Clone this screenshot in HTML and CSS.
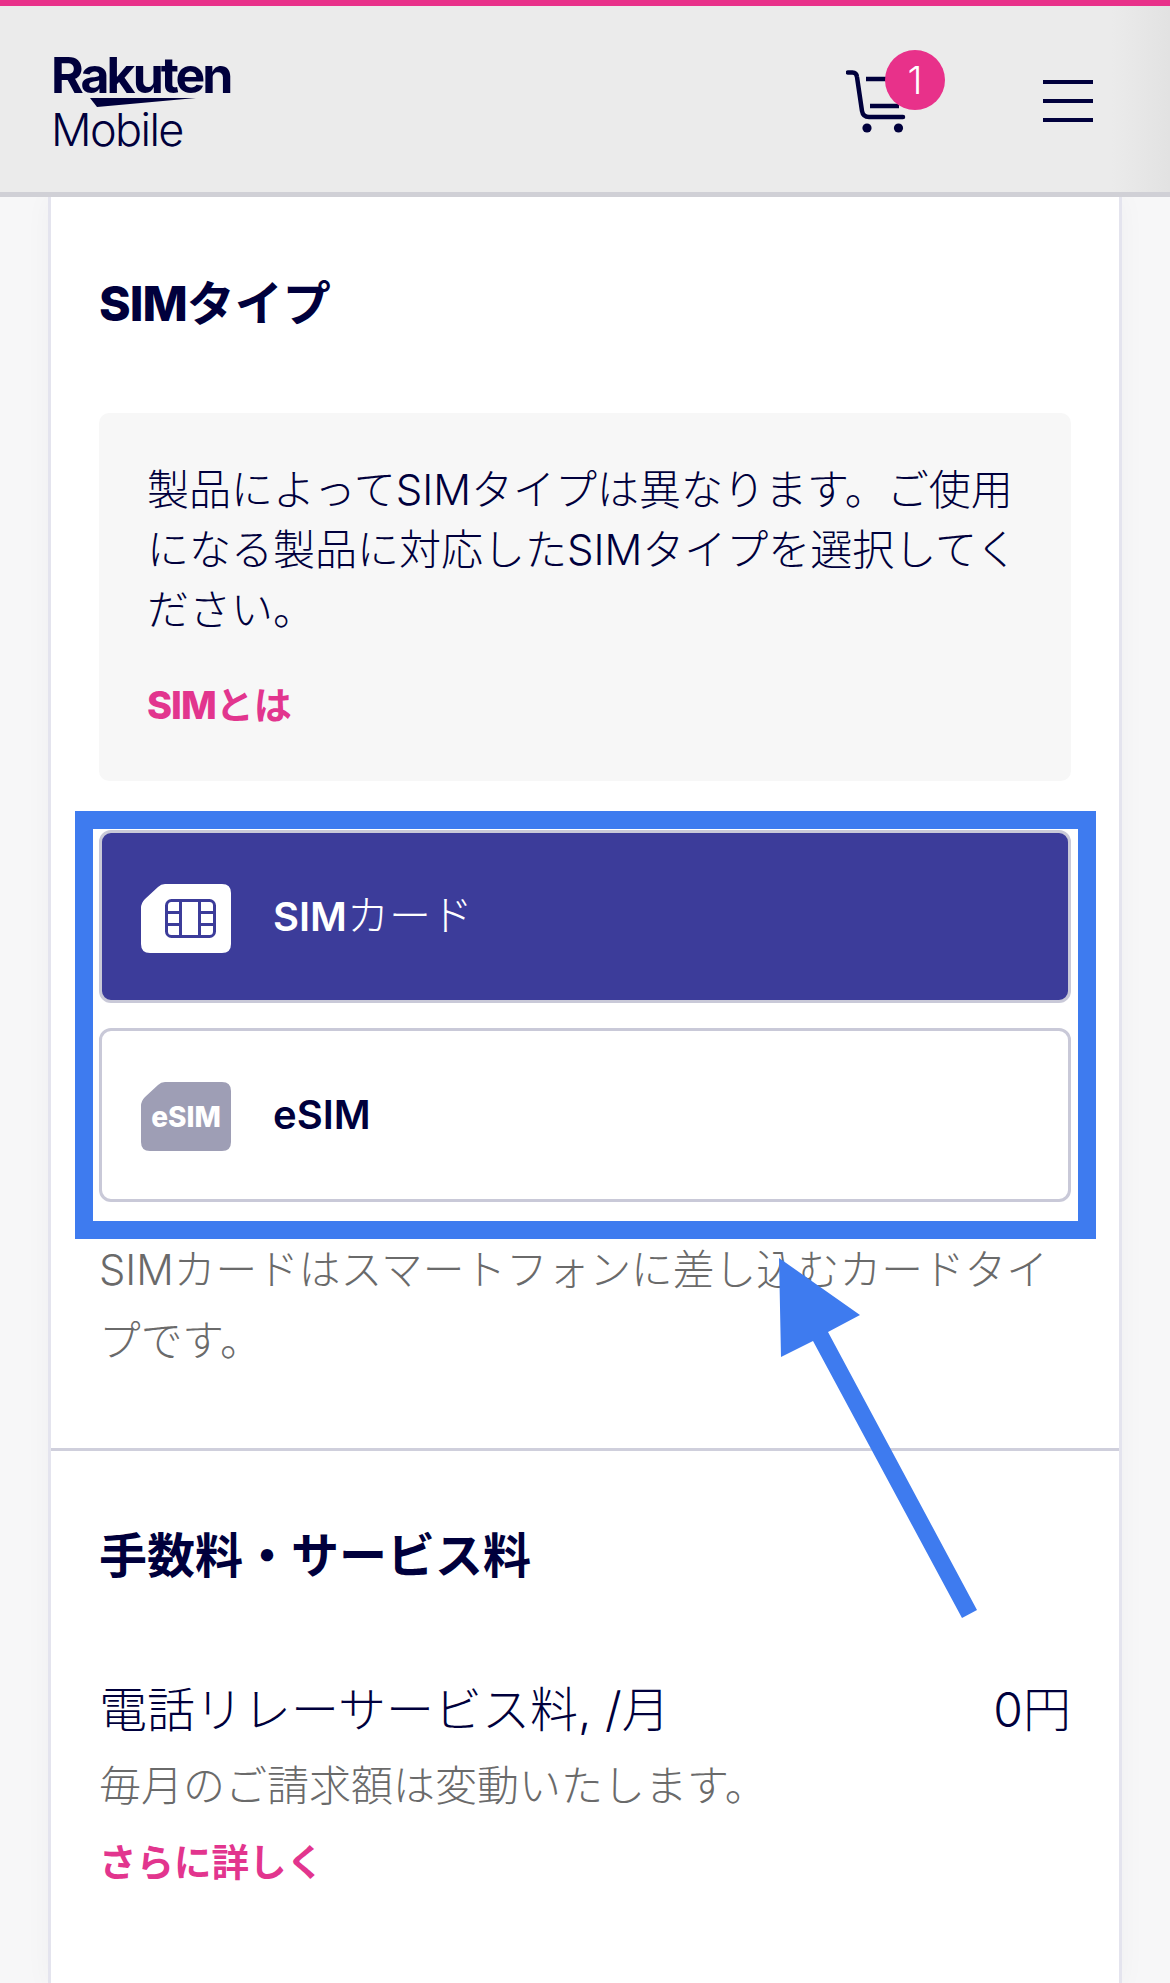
FILE: index.html
```html
<!DOCTYPE html>
<html lang="ja">
<head>
<meta charset="utf-8">
<title>Rakuten Mobile SIMタイプ</title>
<link rel="stylesheet" href="styles.css">
</head>
<body>
<div class="page">
  <header class="header">
    <a class="logo">
      <span class="logo-top">Rakuten</span>
      <svg class="logo-swoosh" viewBox="0 0 106 9"><polygon points="0,0 106,0 7,9"/></svg>
      <span class="logo-bottom">Mobile</span>
    </a>
    <div class="header-actions">
      <div class="cart">
        <svg class="cart-icon" viewBox="0 0 60 66" fill="none">
          <path d="M2 2.500H6.500Q10.500 2.500 11 7L16 41Q17 47 23 47H57" stroke-width="4.500" stroke-linecap="round"/>
          <path d="M20 9H50M24 36H53" stroke-width="4.500"/>
          <circle class="wheel" cx="21" cy="58" r="4.600"/>
          <circle class="wheel" cx="52.500" cy="58" r="4.600"/>
        </svg>
        <span class="badge">1</span>
      </div>
      <div class="menu"><i></i><i></i><i></i></div>
    </div>
  </header>

  <main class="card">
    <section class="section sim-section">
      <h2 class="title"><span class="latin">SIM</span>タイプ</h2>
      <div class="note">
        <p>製品によってSIMタイプは異なります。ご使用になる製品に対応したSIMタイプを選択してください。</p>
        <a class="link note-link"><span class="latin">SIM</span>とは</a>
      </div>
      <div class="options">
        <div class="option selected">
          <svg class="sim-icon" viewBox="0 0 90 69">
            <path class="sim-body" d="M24 0H81Q90 0 90 9V60Q90 69 81 69H9Q0 69 0 60V24Q0 19 4 15L17 3Q20 0 24 0Z"/>
            <g class="chip" fill="none">
              <rect x="25.500" y="16.500" width="48" height="36" rx="5"/>
              <path d="M39.500 16.500V52.500M58.500 16.500V52.500M25.500 28.500H39.500M25.500 40.500H39.500M58.500 28.500H73.500M58.500 40.500H73.500"/>
            </g>
          </svg>
          <span class="option-label"><b>SIM</b>カード</span>
        </div>
        <div class="option">
          <svg class="sim-icon" viewBox="0 0 90 69">
            <path class="esim-body" d="M24 0H81Q90 0 90 9V60Q90 69 81 69H9Q0 69 0 60V24Q0 19 4 15L17 3Q20 0 24 0Z"/>
            <text class="esim-text" x="45" y="45" text-anchor="middle">eSIM</text>
          </svg>
          <span class="option-label strong">eSIM</span>
        </div>
        <span class="frame"></span>
      </div>
      <p class="help">SIMカードはスマートフォンに差し込むカードタイプです。</p>
    </section>

    <section class="section fee-section">
      <h2 class="title">手数料・サービス料</h2>
      <div class="fee-row">
        <span class="fee-name">電話リレーサービス料, /月</span>
        <span class="fee-price">0円</span>
      </div>
      <p class="fee-note">毎月のご請求額は変動いたします。</p>
      <a class="link more">さらに詳しく</a>
    </section>
  </main>

  <svg class="arrow" viewBox="0 0 1170 1983">
    <polygon points="779,1258 860,1315 828,1332 977,1610 962,1618 813,1341 781,1357"/>
  </svg>
</div>
</body>
</html>
```
FILE: styles.css
```css
* { box-sizing: border-box; }
html, body { margin: 0; padding: 0; }
body {
  font-family: Inter, "Noto Sans CJK JP", sans-serif;
  font-weight: 300;
  color: #00003c;
  background: #f7f7f8;
}
.page {
  position: relative;
  width: 1170px;
  height: 1983px;
  overflow: hidden;
  border-top: 6px solid #e8318a;
}
.header {
  position: relative;
  height: 191px;
  padding: 0 77px 0 51px;
  display: flex;
  align-items: center;
  justify-content: space-between;
  background: linear-gradient(90deg, #ebebeb 95%, #e2e2e2 100%);
  border-bottom: 5px solid #d0d0d6;
}
.logo {
  display: flex;
  flex-direction: column;
  align-items: flex-start;
  margin-top: 4px;
}
.logo-top {
  font-size: 50px;
  line-height: 44px;
  font-weight: 700;
  letter-spacing: -3px;
  height: 44px;
}
.logo-swoosh { width: 106px; height: 9px; margin: 1px 0 0 39px; fill: #00003c; display: block; }
.logo-bottom {
  font-size: 45px;
  line-height: 40px;
  font-weight: 300;
  letter-spacing: -1.600px;
  margin-top: 3px;
}
.header-actions { display: flex; align-items: flex-start; gap: 137px; height: 82px; }
.cart { position: relative; width: 60px; height: 66px; margin-top: 12px; }
.cart-icon { width: 60px; height: 66px; display: block; stroke: #00003c; }
.wheel { fill: #00003c; stroke: none; }
.badge {
  position: absolute;
  left: 39px;
  top: -20px;
  width: 60px;
  height: 60px;
  border-radius: 50%;
  background: #e8318a;
  color: #fff;
  font-size: 38px;
  font-weight: 300;
  line-height: 60px;
  text-align: center;
}
.menu { width: 50px; display: flex; flex-direction: column; gap: 15px; margin-top: 22px; }
.menu i { display: block; height: 4px; background: #00003c; }
.card {
  margin: 0 48px;
  background: #fff;
  border-left: 3px solid #e4e4ee;
  border-right: 3px solid #e4e4ee;
  height: 1790px;
  box-shadow: 0 0 26px rgba(0, 0, 60, .035);
}
.section { padding: 0 48px; }
.sim-section { height: 1254px; border-bottom: 3px solid #cfcfdc; padding-top: 72px; }
.title {
  margin: 0;
  font-size: 48px;
  line-height: 70px;
  font-weight: 700;
}
.latin { font-weight: 800; letter-spacing: -1px; }
.note {
  margin-top: 74px;
  height: 368px;
  padding: 47px 48px 0;
  background: #f7f7f7;
  border-radius: 10px;
  font-size: 42px;
  line-height: 60px;
}
.note p { margin: 0; }
.link {
  display: block;
  color: #e2358e;
  font-weight: 700;
}
.note-link { font-size: 38px; line-height: 50px; margin-top: 40px; }
.options { position: relative; margin-top: 49px; display: flex; flex-direction: column; gap: 25px; }
.option {
  height: 174px;
  padding-left: 39px;
  display: flex;
  align-items: center;
  gap: 42px;
  border: 3px solid #c9c9d8;
  border-radius: 12px;
  background: #fff;
}
.option.selected { background: #3c3c9a; color: #fff; height: 173px; }
.sim-icon { width: 90px; height: 69px; flex: none; margin-top: 3px; }
.sim-body { fill: #fff; }
.chip { stroke: #3c3c9a; stroke-width: 3; }
.esim-body { fill: #9e9eb5; }
.esim-text { font-family: Inter, sans-serif; font-size: 28px; font-weight: 800; fill: #fff; }
.option-label { font-size: 42px; line-height: 50px; }
.option-label b { font-size: 40px; font-weight: 600; }
.option-label.strong { font-size: 40px; font-weight: 600; }
.frame {
  position: absolute;
  left: -24px;
  right: -25px;
  top: -19px;
  bottom: -37px;
  border: 18px solid #3e7bef;
  pointer-events: none;
}
.help {
  margin: 33px 0 0;
  font-size: 41.700px;
  line-height: 71px;
  color: #6a6a6a;
}
.fee-section { padding-top: 70px; }
.title + .fee-row { margin-top: 84px; }
.fee-row {
  display: flex;
  justify-content: space-between;
  font-size: 48px;
  line-height: 70px;
}
.fee-note { margin: 11px 0 0; font-size: 42px; line-height: 60px; color: #6a6a6a; }
.more { font-size: 37.500px; line-height: 50px; margin-top: 22px; }
.arrow { position: absolute; left: 0; top: -6px; width: 1170px; height: 1983px; fill: #3e7bef; pointer-events: none; }
```
